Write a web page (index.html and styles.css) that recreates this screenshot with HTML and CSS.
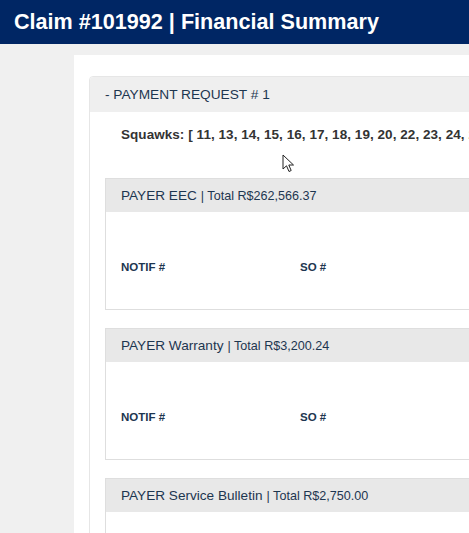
FILE: index.html
```html
<!DOCTYPE html>
<html>
<head>
<meta charset="utf-8">
<link rel="stylesheet" href="styles.css">
</head>
<body>
<header class="topbar"><h1 class="title">Claim #101992 | Financial Summary</h1></header>
<main class="stage">
  <section class="panel">
    <div class="request">
      <div class="request-head">- PAYMENT REQUEST # 1</div>
      <div class="request-body">
        <p class="squawks">Squawks: [ 11, 13, 14, 15, 16, 17, 18, 19, 20, 22, 23, 24, 25, 26, 27 ]</p>
        <div class="payer">
          <div class="payer-head"><span class="payer-name">PAYER EEC</span> <span class="payer-total">| Total R$262,566.37</span></div>
          <div class="payer-body">
            <span class="col">NOTIF #</span><span class="col">SO #</span>
          </div>
        </div>
        <div class="payer">
          <div class="payer-head"><span class="payer-name">PAYER Warranty</span> <span class="payer-total">| Total R$3,200.24</span></div>
          <div class="payer-body">
            <span class="col">NOTIF #</span><span class="col">SO #</span>
          </div>
        </div>
        <div class="payer">
          <div class="payer-head"><span class="payer-name">PAYER Service Bulletin</span> <span class="payer-total">| Total R$2,750.00</span></div>
          <div class="payer-body">
            <span class="col">NOTIF #</span><span class="col">SO #</span>
          </div>
        </div>
      </div>
    </div>
  </section>
  <svg class="cursor" width="13" height="20" viewBox="0 0 13 20"><path d="M1 1 L1 15 L4.5 11.8 L7 17.5 L9.2 16.5 L6.8 11 L11.5 11 Z" fill="#fff" stroke="#222" stroke-width="1" stroke-linejoin="round"/></svg>
</main>
</body>
</html>
```
FILE: styles.css
```css
html, body { margin: 0; padding: 0; }
body {
  font-family: "Liberation Sans", Arial, sans-serif;
  background: #f0f0f0;
  overflow: hidden;
  width: 469px;
  height: 533px;
}
.topbar {
  background: #002664;
  height: 44px;
  display: flex;
  align-items: center;
  padding-left: 14px;
}
.title {
  margin: 0;
  color: #fff;
  font-size: 21.6px;
  font-weight: bold;
  white-space: nowrap;
}
.stage {
  position: relative;
  padding: 11px 0 0 74px;
}
.panel {
  background: #fff;
  width: 620px;
  padding: 21px 15px 0 15px;
  min-height: 500px;
}
.request {
  border: 1px solid #e6e6e6;
  border-radius: 4px;
}
.request-head {
  background: #efefef;
  height: 35px;
  display: flex;
  align-items: center;
  padding: 0 0 1px 15px;
  box-sizing: border-box;
  color: #1d3650;
  font-size: 13.7px;
  border-radius: 4px 4px 0 0;
}
.request-body {
  padding: 0 15px;
}
.squawks {
  margin: 0;
  height: 66px;
  padding: 15px 0 0 16px;
  box-sizing: border-box;
  font-size: 13.5px;
  letter-spacing: 0.05px;
  font-weight: bold;
  color: #333;
  white-space: nowrap;
}
.payer {
  border: 1px solid #dedede;
  margin-bottom: 18px;
}
.payer-head {
  background: #e8e8e8;
  height: 33px;
  display: flex;
  align-items: center;
  padding-left: 15px;
  color: #1d3650;
  white-space: nowrap;
}
.payer-name { font-size: 13.6px; }
.payer-total { font-size: 12.6px; margin-left: 4px; }
.payer-body {
  height: 97px;
  display: flex;
  align-items: center;
  padding: 12px 0 0 15px;
  box-sizing: border-box;
}
.col {
  width: 179px;
  font-size: 11.5px;
  font-weight: bold;
  color: #1d3650;
}
.cursor {
  position: absolute;
  left: 282px;
  top: 110px;
}
```
